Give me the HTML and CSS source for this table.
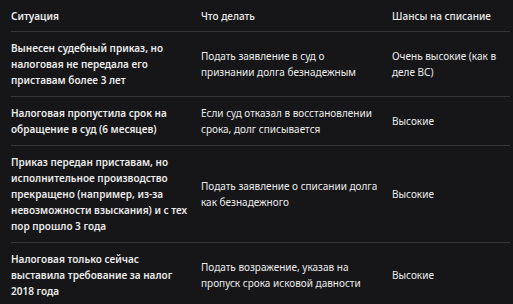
FILE: index.html
```html
<!DOCTYPE html>
<html lang="ru">
<head>
<meta charset="utf-8">
<link rel="stylesheet" href="styles.css">
</head>
<body>
<div class="table">
  <div class="row head">
    <div class="cell c1">Ситуация</div>
    <div class="cell c2">Что делать</div>
    <div class="cell c3">Шансы на списание</div>
  </div>
  <div class="row">
    <div class="cell c1">Вынесен судебный приказ, но налоговая не передала его приставам более 3 лет</div>
    <div class="cell c2">Подать заявление в суд о признании долга безнадежным</div>
    <div class="cell c3">Очень высокие (как в деле ВС)</div>
  </div>
  <div class="row">
    <div class="cell c1">Налоговая пропустила срок на обращение в суд (6 месяцев)</div>
    <div class="cell c2">Если суд отказал в восстановлении срока, долг списывается</div>
    <div class="cell c3">Высокие</div>
  </div>
  <div class="row">
    <div class="cell c1">Приказ передан приставам, но исполнительное производство прекращено (например, из-за невозможности взыскания) и с тех пор прошло 3 года</div>
    <div class="cell c2">Подать заявление о списании долга как безнадежного</div>
    <div class="cell c3">Высокие</div>
  </div>
  <div class="row last">
    <div class="cell c1">Налоговая только сейчас выставила требование за налог 2018 года</div>
    <div class="cell c2">Подать возражение, указав на пропуск срока исковой давности</div>
    <div class="cell c3">Высокие</div>
  </div>
</div>
</body>
</html>
```
FILE: styles.css
```css
html, body {
  margin: 0;
  padding: 0;
  background: #161618;
}
body {
  font-family: "Noto Sans", "Open Sans", sans-serif;
  font-size: 10px;
  line-height: 16px;
  color: #ececec;
}
.table {
  margin-left: 11px;
  width: 499px;
}
.row {
  display: grid;
  grid-template-columns: 190px 191px 118px;
  border-bottom: 1px solid #363638;
  align-items: center;
}
.row.last {
  border-bottom: none;
}
.cell {
  padding: 8px 12px 8px 0;
}
.c3 {
  padding-right: 0;
}
.c1 {
  font-weight: 600;
}
.head .cell {
  font-weight: 600;
  padding-top: 8px;
  padding-bottom: 7px;
}
.head .c2, .head .c3 {
  font-weight: 500;
}
```
